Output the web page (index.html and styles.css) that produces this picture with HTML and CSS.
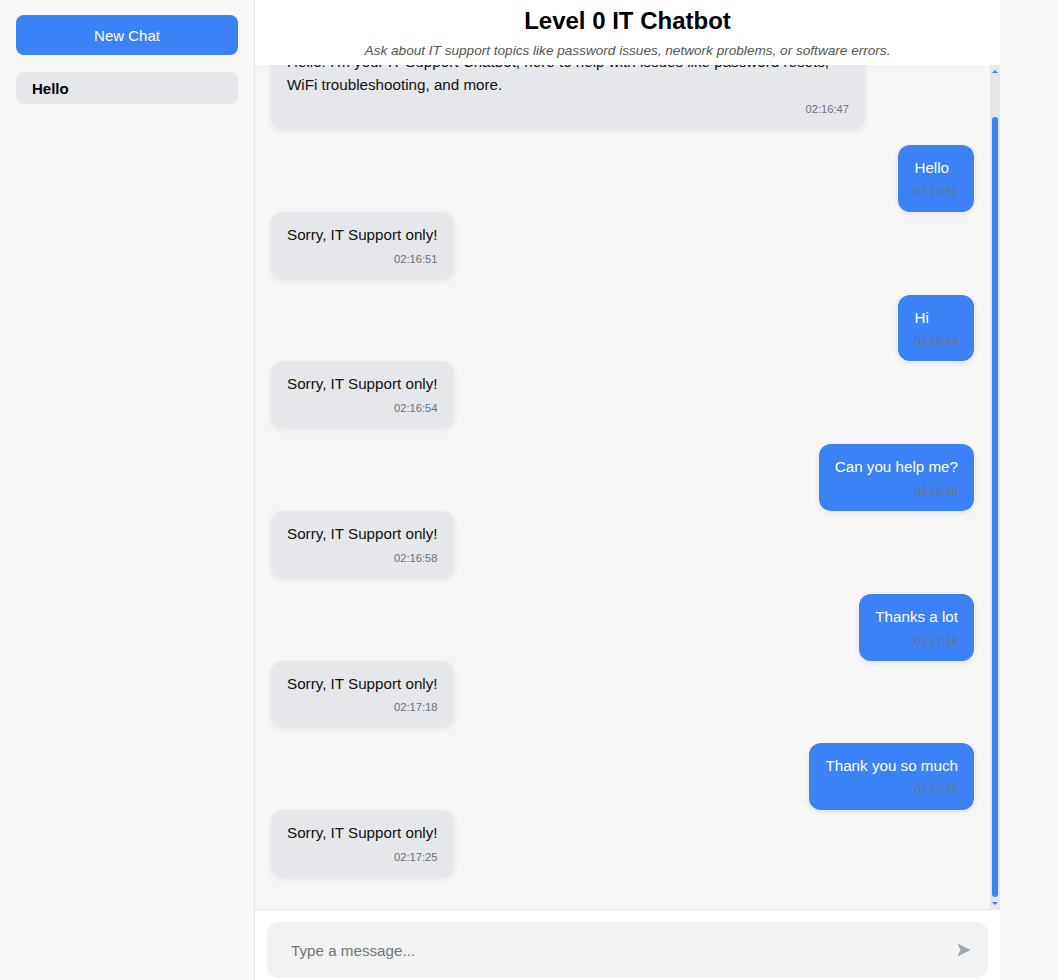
FILE: index.html
```html
<!DOCTYPE html>
<html lang="en">
<head>
<meta charset="utf-8">
<title>Level 0 IT Chatbot</title>
<link rel="stylesheet" href="styles.css">
</head>
<body>
<div class="app">
  <aside class="sidebar">
    <button class="new-chat">New Chat</button>
    <div class="chat-item">Hello</div>
  </aside>
  <main class="main">
    <header class="header">
      <h1 class="title">Level 0 IT Chatbot</h1>
      <p class="subtitle">Ask about IT support topics like password issues, network problems, or software errors.</p>
    </header>
    <div class="messages-wrap">
      <div class="messages">
        <div class="messages-inner">
          <div class="msg bot"><div class="text">Hello! I'm your IT Support Chatbot, here to help with issues like password resets, WiFi troubleshooting, and more.</div><div class="time">02:16:47</div></div>
          <div class="msg user"><div class="text">Hello</div><div class="time">02:16:51</div></div>
          <div class="msg bot"><div class="text">Sorry, IT Support only!</div><div class="time">02:16:51</div></div>
          <div class="msg user"><div class="text">Hi</div><div class="time">02:16:54</div></div>
          <div class="msg bot"><div class="text">Sorry, IT Support only!</div><div class="time">02:16:54</div></div>
          <div class="msg user"><div class="text">Can you help me?</div><div class="time">02:16:58</div></div>
          <div class="msg bot"><div class="text">Sorry, IT Support only!</div><div class="time">02:16:58</div></div>
          <div class="msg user"><div class="text">Thanks a lot</div><div class="time">02:17:18</div></div>
          <div class="msg bot"><div class="text">Sorry, IT Support only!</div><div class="time">02:17:18</div></div>
          <div class="msg user"><div class="text">Thank you so much</div><div class="time">02:17:25</div></div>
          <div class="msg bot"><div class="text">Sorry, IT Support only!</div><div class="time">02:17:25</div></div>
        </div>
      </div>
      <div class="scrollbar" aria-hidden="true">
        <div class="sb-btn"><svg width="6" height="3" viewBox="0 0 6 3"><path d="M0 3 L3 0 L6 3 Z" fill="#3b82f6"/></svg></div>
        <div class="sb-thumb"></div>
        <div class="sb-btn"><svg width="6" height="3" viewBox="0 0 6 3"><path d="M0 0 L6 0 L3 3 Z" fill="#3b82f6"/></svg></div>
      </div>
    </div>
    <div class="composer">
      <div class="input-box">
        <input class="input" type="text" placeholder="Type a message...">
        <button class="send" aria-label="Send">
          <svg width="14" height="14" viewBox="0 0 14 14"><path d="M0.5 0.5 L13.5 7 L0.5 13.5 L3.5 7 Z" fill="#9ca3af"/></svg>
        </button>
      </div>
    </div>
  </main>
</div>
</body>
</html>
```

FILE: styles.css
```css
* { box-sizing: border-box; }

html, body {
  margin: 0;
  padding: 0;
  height: 100%;
}

body {
  background: #f6f6f6;
  font-family: "Liberation Sans", Arial, sans-serif;
  color: #111;
  overflow: hidden;
}

.app {
  display: flex;
  width: 1000px;
  height: 100vh;
}

.sidebar {
  width: 255px;
  flex-shrink: 0;
  padding: 15px 16px;
  background: #f7f7f7;
  border-right: 1px solid #e3e3e3;
  display: flex;
  flex-direction: column;
}

.new-chat {
  height: 40px;
  width: 100%;
  border: none;
  border-radius: 8px;
  background: #3b82f6;
  color: #fff;
  font-family: inherit;
  font-size: 15px;
  cursor: pointer;
}

.chat-item {
  margin-top: 17px;
  height: 32px;
  line-height: 33px;
  padding: 0 16px;
  background: #e5e7eb;
  border-radius: 8px;
  font-weight: bold;
  font-size: 15px;
  color: #000;
}

.main {
  flex: 1;
  min-width: 0;
  display: flex;
  flex-direction: column;
  background: #fff;
}

.header {
  height: 65px;
  flex-shrink: 0;
  padding-top: 7px;
  text-align: center;
  background: #fff;
}

.title {
  margin: 0;
  font-size: 24px;
  line-height: 28px;
  font-weight: bold;
  color: #000;
}

.subtitle {
  margin: 7px 0 0;
  font-size: 13.6px;
  line-height: 17px;
  font-style: italic;
  color: #555;
}

.messages-wrap {
  flex: 1;
  min-height: 0;
  display: flex;
  background: #f6f6f6;
}

.messages {
  flex: 1;
  min-width: 0;
  overflow-y: auto;
  display: flex;
  flex-direction: column-reverse;
  scrollbar-width: none;
}

.scrollbar {
  width: 10px;
  flex-shrink: 0;
  background: #e6e7ea;
  display: flex;
  flex-direction: column;
  align-items: center;
}

.sb-btn {
  height: 12px;
  display: flex;
  align-items: center;
  justify-content: center;
  flex-shrink: 0;
}

.sb-btn svg {
  display: block;
}

.sb-thumb {
  flex: 1;
  width: 6px;
  margin-top: 40px;
  background: #3b82f6;
  border-radius: 3px;
}

.messages-inner {
  padding: 16px;
  display: flex;
  flex-direction: column;
}

.msg {
  max-width: 84.5%;
  padding: 12px 16px;
  border-radius: 12px;
  box-shadow: 0 2px 6px rgba(0, 0, 0, 0.08);
}

.msg .text {
  font-size: 15.2px;
  line-height: 22.8px;
}

.msg .time {
  margin-top: 4px;
  font-size: 11.2px;
  line-height: 16px;
  text-align: right;
  color: #6b7280;
}

.bot {
  align-self: flex-start;
  background: #e5e7eb;
  color: #111;
  margin-bottom: 16px;
}

.user {
  align-self: flex-end;
  background: #3b82f6;
  color: #fff;
}

.composer {
  flex-shrink: 0;
  border-top: 1px solid #e5e7eb;
  background: #fff;
  padding: 12px 12px 2px;
}

.input-box {
  height: 56px;
  display: flex;
  align-items: center;
  background: #f1f2f4;
  border-radius: 12px;
}

.input {
  flex: 1;
  min-width: 0;
  height: 100%;
  border: none;
  background: transparent;
  outline: none;
  padding: 0 24px;
  font-family: inherit;
  font-size: 15.2px;
  color: #111;
}

.input::placeholder {
  color: #757575;
}

.send {
  display: flex;
  align-items: center;
  border: none;
  background: transparent;
  padding: 0 17px 0 0;
  cursor: pointer;
}
```
